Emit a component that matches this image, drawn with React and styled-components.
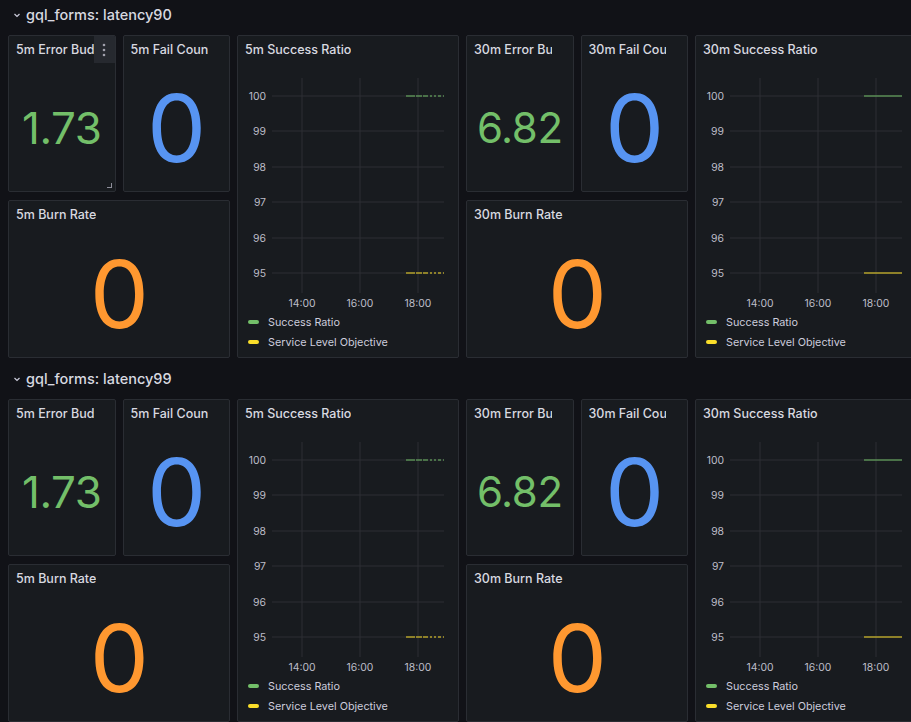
import React from "react";
import styled, { createGlobalStyle } from "styled-components";

const GlobalStyle = createGlobalStyle`
  html, body {
    margin: 0;
    padding: 0;
    background: #111217;
  }
  body {
    font-family: Inter, "Noto Sans", sans-serif;
    color: #ccccdc;
  }
`;

const Page = styled.div`
  width: 911px;
  height: 722px;
  overflow: hidden;
  padding: 2px 0 0 8px;
  box-sizing: border-box;
  display: flex;
  flex-direction: column;
  gap: 8px;
`;

const Section = styled.section`
  display: flex;
  flex-direction: column;
  gap: 8px;
`;

const RowHeader = styled.div`
  height: 25px;
  display: flex;
  align-items: center;
  gap: 4px;
  padding-left: 4px;
  font-size: 14.5px;
  font-weight: 500;
  color: #d8d9e0;
  white-space: nowrap;
`;

const Grid = styled.div`
  display: grid;
  grid-template-columns: repeat(8, 107.5px);
  grid-template-rows: 157px 158px;
  gap: 8px 7px;
`;

const Panel = styled.div`
  position: relative;
  box-sizing: border-box;
  grid-column: ${(p) => p.$col};
  grid-row: ${(p) => p.$row};
  background: #181b1f;
  border: 1px solid #2a2d33;
  border-radius: 2px;
  display: flex;
  flex-direction: column;
  overflow: hidden;
`;

const PanelHeader = styled.div`
  height: 27px;
  flex: none;
  display: flex;
  align-items: center;
  padding: 0 21px 0 7px;
  min-width: 0;
`;

const Title = styled.h2`
  margin: 0;
  font-size: 12.5px;
  font-weight: 500;
  color: #d8d9e0;
  white-space: nowrap;
  overflow: hidden;
`;

const MenuButton = styled.div`
  position: absolute;
  top: 0;
  right: 0;
  width: 21px;
  height: 27px;
  background: #26292f;
  display: flex;
  align-items: center;
  justify-content: center;
`;

const ResizeHandle = styled.span`
  position: absolute;
  right: 3px;
  bottom: 3px;
  width: 4px;
  height: 4px;
  border-right: 1px solid #8e8e9a;
  border-bottom: 1px solid #8e8e9a;
`;

const StatBody = styled.div`
  flex: 1;
  display: flex;
  align-items: center;
  justify-content: center;
  padding-top: 2px;
  font-size: ${(p) => p.$size}px;
  line-height: 1;
  font-weight: 400;
  color: ${(p) => p.$color};
  letter-spacing: -0.01em;
`;

const Legend = styled.ul`
  list-style: none;
  margin: 0;
  padding: 0 0 5px 10px;
  flex: none;
`;

const LegendItem = styled.li`
  height: 20px;
  display: flex;
  align-items: center;
  gap: 9px;
  font-size: 10.8px;
  color: #ccccdc;
`;

const Swatch = styled.span`
  width: 11px;
  height: 4px;
  border-radius: 2px;
  background: ${(p) => p.$color};
`;

const ChartSvg = styled.svg`
  flex: 1;
  display: block;
`;

const GREEN = "#73bf69";
const BLUE = "#5794f2";
const ORANGE = "#ff9830";
const YELLOW = "#fade2a";

const yTicks = [
  { label: "100", y: 33 },
  { label: "99", y: 68 },
  { label: "98", y: 104 },
  { label: "97", y: 139 },
  { label: "96", y: 175 },
  { label: "95", y: 210 },
];
const xTicks = [
  { label: "14:00", x: 64 },
  { label: "16:00", x: 122 },
  { label: "18:00", x: 180 },
];

const Chevron = () => (
  <svg width="10" height="10" viewBox="0 0 10 10">
    <path d="M2.5 4 L5 6.5 L7.5 4" fill="none" stroke="#ccccdc" strokeWidth="1.2" />
  </svg>
);

const Dots = () => (
  <svg width="4" height="14" viewBox="0 0 4 14">
    <circle cx="2" cy="2" r="1.3" fill="#a0a0ab" />
    <circle cx="2" cy="7" r="1.3" fill="#a0a0ab" />
    <circle cx="2" cy="12" r="1.3" fill="#a0a0ab" />
  </svg>
);

const SeriesLine = ({ y, color, dashed }) => (
  <line
    x1="168"
    x2="206"
    y1={y}
    y2={y}
    stroke={color}
    strokeWidth="1"
    strokeDasharray={dashed ? "9 1 6 1 5 2 2 2 2 2 3 2 4" : undefined}
  />
);

const Chart = ({ dashed }) => (
  <ChartSvg viewBox="0 0 220 248" preserveAspectRatio="xMinYMin meet">
    {yTicks.map((t) => (
      <g key={t.label}>
        <line x1="34" x2="206" y1={t.y} y2={t.y} stroke="#2c2f35" />
        <text x="28" y={t.y + 3.7} textAnchor="end" fontSize="10.4" fill="#bdbdc8" fontFamily="Inter, sans-serif">
          {t.label}
        </text>
      </g>
    ))}
    {xTicks.map((t) => (
      <g key={t.label}>
        <line x1={t.x} x2={t.x} y1="15" y2="230" stroke="#2c2f35" />
        <text x={t.x} y="244" textAnchor="middle" fontSize="10.4" fill="#bdbdc8" fontFamily="Inter, sans-serif">
          {t.label}
        </text>
      </g>
    ))}
    <SeriesLine y={33} color={GREEN} dashed={dashed} />
    <SeriesLine y={210} color={YELLOW} dashed={dashed} />
  </ChartSvg>
);

const StatPanel = ({ col, row, title, value, color, size, menu }) => (
  <Panel $col={col} $row={row}>
    <PanelHeader>
      <Title>{title}</Title>
    </PanelHeader>
    <StatBody $color={color} $size={size}>
      {value}
    </StatBody>
    {menu && (
      <>
        <MenuButton>
          <Dots />
        </MenuButton>
        <ResizeHandle />
      </>
    )}
  </Panel>
);

const ChartPanel = ({ col, title, dashed }) => (
  <Panel $col={col} $row="1 / span 2">
    <PanelHeader>
      <Title>{title}</Title>
    </PanelHeader>
    <Chart dashed={dashed} />
    <Legend>
      <LegendItem>
        <Swatch $color={GREEN} />
        Success Ratio
      </LegendItem>
      <LegendItem>
        <Swatch $color={YELLOW} />
        Service Level Objective
      </LegendItem>
    </Legend>
  </Panel>
);

const SloRow = ({ name, withMenu }) => (
  <Section>
    <RowHeader>
      <Chevron />
      {name}
    </RowHeader>
    <Grid>
      <StatPanel col="1" row="1" title="5m Error Budget" value="1.73" color={GREEN} size={44} menu={withMenu} />
      <StatPanel col="2" row="1" title="5m Fail Count" value="0" color={BLUE} size={94} />
      <ChartPanel col="3 / span 2" title="5m Success Ratio" dashed />
      <StatPanel col="1 / span 2" row="2" title="5m Burn Rate" value="0" color={ORANGE} size={94} />
      <StatPanel col="5" row="1" title="30m Error Budget" value="6.82" color={GREEN} size={42} />
      <StatPanel col="6" row="1" title="30m Fail Count" value="0" color={BLUE} size={94} />
      <ChartPanel col="7 / span 2" title="30m Success Ratio" />
      <StatPanel col="5 / span 2" row="2" title="30m Burn Rate" value="0" color={ORANGE} size={94} />
    </Grid>
  </Section>
);

export default function App() {
  return (
    <>
      <GlobalStyle />
      <Page>
        <SloRow name="gql_forms: latency90" withMenu />
        <SloRow name="gql_forms: latency99" />
      </Page>
    </>
  );
}
